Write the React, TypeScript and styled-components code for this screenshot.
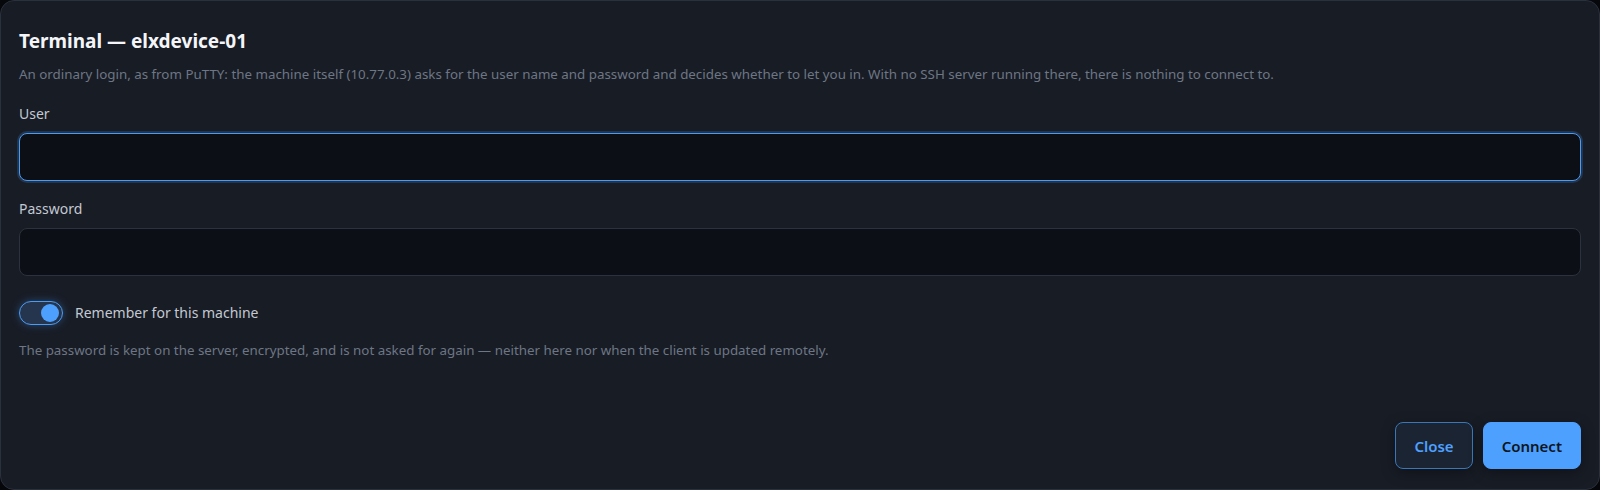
import styled, { createGlobalStyle } from "styled-components";

const GlobalStyle = createGlobalStyle`
  html, body {
    margin: 0;
    padding: 0;
    background: #07090d;
  }
  body {
    font-family: "Noto Sans", "Open Sans", sans-serif;
  }
`;

const Dialog = styled.div`
  box-sizing: border-box;
  display: flex;
  flex-direction: column;
  width: 1600px;
  height: 490px;
  padding: 26px 18px 20px;
  background: #181c25;
  border: 1px solid #2a303c;
  border-radius: 14px;
  box-shadow: 0 10px 40px rgba(0, 0, 0, 0.5);
`;

const Title = styled.h2`
  margin: 0;
  font-size: 19px;
  font-weight: 700;
  line-height: 28px;
  color: #f3f5f8;
`;

const Hint = styled.p<{ $gap?: number }>`
  margin: ${(p) => p.$gap ?? 9}px 0 0;
  font-size: 13.35px;
  line-height: 20px;
  color: #6d7684;
`;

const Field = styled.label<{ $gap?: number }>`
  display: flex;
  flex-direction: column;
  gap: 9px;
  margin-top: ${(p) => p.$gap ?? 20}px;
`;

const Label = styled.span`
  font-size: 14px;
  line-height: 20px;
  color: #c3c9d2;
`;

const Input = styled.input<{ $focused?: boolean }>`
  box-sizing: border-box;
  height: 48px;
  width: 100%;
  padding: 0 14px;
  background: #0c0f15;
  color: #e6e9ee;
  font: inherit;
  font-size: 14px;
  border-radius: 8px;
  outline: none;
  border: ${(p) => (p.$focused ? "1.5px solid #4b9cf5" : "1px solid #2c323d")};
  box-shadow: ${(p) =>
    p.$focused ? "0 0 0 2px rgba(75, 156, 245, 0.2)" : "none"};
`;

const ToggleRow = styled.div`
  display: flex;
  align-items: center;
  gap: 12px;
  margin-top: 25px;
`;

const Track = styled.span<{ $on: boolean }>`
  box-sizing: border-box;
  display: flex;
  align-items: center;
  justify-content: ${(p) => (p.$on ? "flex-end" : "flex-start")};
  width: 44px;
  height: 24px;
  padding: 0 3px;
  border-radius: 12px;
  background: #25354d;
  border: 1.5px solid #4b9cf5;
  box-shadow: 0 0 8px rgba(75, 156, 245, 0.35);
`;

const Knob = styled.span`
  width: 18px;
  height: 18px;
  border-radius: 50%;
  background: #4ea0ff;
`;

const Footer = styled.div`
  display: flex;
  justify-content: flex-end;
  gap: 10px;
  margin-top: auto;
`;

const Button = styled.button<{ $primary?: boolean }>`
  height: 47px;
  padding: 0 18px;
  border-radius: 8px;
  font-family: inherit;
  font-size: 15px;
  font-weight: 600;
  cursor: pointer;
  border: 1px solid ${(p) => (p.$primary ? "#4ea0ff" : "#3b77b8")};
  background: ${(p) => (p.$primary ? "#4ea0ff" : "#1a2432")};
  color: ${(p) => (p.$primary ? "#0c1520" : "#4ea0ff")};
  box-shadow: 0 4px 14px rgba(0, 0, 0, 0.35);
`;

export default function App() {
  return (
    <>
      <GlobalStyle />
      <Dialog>
        <Title>Terminal — elxdevice-01</Title>
        <Hint>
          An ordinary login, as from PuTTY: the machine itself (10.77.0.3) asks
          for the user name and password and decides whether to let you in.
          With no SSH server running there, there is nothing to connect to.
        </Hint>
        <Field>
          <Label>User</Label>
          <Input $focused />
        </Field>
        <Field $gap={18}>
          <Label>Password</Label>
          <Input type="password" />
        </Field>
        <ToggleRow>
          <Track $on>
            <Knob />
          </Track>
          <Label>Remember for this machine</Label>
        </ToggleRow>
        <Hint $gap={15}>
          The password is kept on the server, encrypted, and is not asked for
          again — neither here nor when the client is updated remotely.
        </Hint>
        <Footer>
          <Button>Close</Button>
          <Button $primary>Connect</Button>
        </Footer>
      </Dialog>
    </>
  );
}
